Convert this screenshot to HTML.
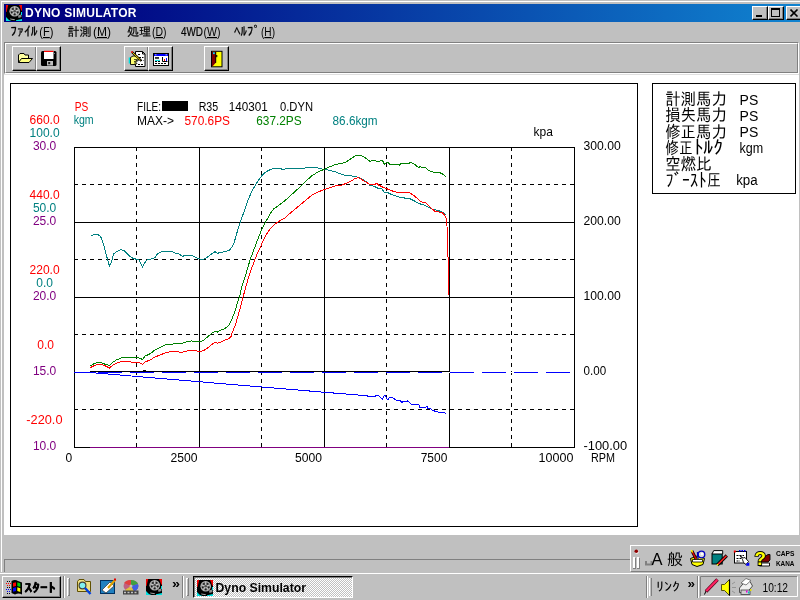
<!DOCTYPE html><html lang="ja"><head><meta charset="utf-8"><title>DYNO SIMULATOR</title><style>
*{margin:0;padding:0;box-sizing:border-box}
html,body{width:800px;height:600px;overflow:hidden;background:#c0c0c0}
body{position:relative;font-family:"Liberation Sans","IPAGothic","Noto Sans CJK JP",sans-serif;font-size:12px;color:#000}
.abs{position:absolute}
#title{left:4px;top:4px;width:800px;height:18px;background:linear-gradient(90deg,#000080 0%,#000080 8%,#1084d0 100%)}
#title .t{left:21px;top:2px;color:#fff;font-weight:bold;font-size:12px;line-height:14px;white-space:nowrap;letter-spacing:0.25px;will-change:transform}
.cb{top:2px;width:16px;height:14px;background:#c0c0c0;border:1px solid;border-color:#fff #000 #000 #fff;box-shadow:inset -1px -1px 0 #808080}
.menu span{position:absolute;top:24px;font-size:12px;line-height:14px;white-space:nowrap}
.tb{width:25px;height:25px;top:46px;background:#c0c0c0;border:1px solid;border-color:#fff #000 #000 #fff;box-shadow:inset -1px -1px 0 #808080}
svg{will-change:transform}
svg text{font-family:"Liberation Sans","IPAGothic","Noto Sans CJK JP",sans-serif}
</style></head><body>
<div class="abs" style="left:0;top:0;width:800px;height:1px;background:#c0c0c0"></div>
<div class="abs" style="left:1px;top:1px;width:799px;height:1px;background:#fff"></div>
<div class="abs" style="left:1px;top:1px;width:1px;height:571px;background:#fff"></div>
<div id="title" class="abs">
<svg class="abs" style="left:2px;top:1px" width="16" height="16" viewBox="0 0 16 16"><rect width="16" height="16" fill="#000"/><path d="M0 0H2.200L0.600 7H0Z" fill="#f00000"/><path d="M13 0H16V6L15 5L14 2Z" fill="#f00000"/><path d="M0 12L3 15L5.500 16H0Z" fill="#00e0e0"/><path d="M10 15.200L16 14V16H10Z" fill="#00e0e0"/><path d="M15 7H16V10.500L15 10Z" fill="#00e0e0"/><path d="M4 13.500L9 14.200L8.500 15.200L4.500 14.600Z" fill="#a0a0a0"/><path d="M12 10.500L15 9.500L15.500 12L12.500 13Z" fill="#909090"/><circle cx="8.700" cy="6.300" r="5.300" fill="#b4b4b4"/><circle cx="8.700" cy="6.300" r="4.200" fill="#787878"/><g stroke="#c8c8c8" stroke-width="1.100"><path d="M8.700 6.300V2M8.700 6.300L12.700 5M8.700 6.300L11.200 9.800M8.700 6.300L6.200 9.800M8.700 6.300L4.700 5"/></g><g fill="#202020"><circle cx="6.900" cy="3.900" r="0.900"/><circle cx="10.500" cy="3.900" r="0.900"/><circle cx="11.700" cy="7.300" r="0.900"/><circle cx="8.700" cy="9.400" r="0.900"/><circle cx="5.700" cy="7.300" r="0.900"/></g><circle cx="8.700" cy="6.300" r="1.300" fill="#505050"/></svg>
<div class="abs t">DYNO SIMULATOR</div>
<div class="abs cb" style="left:748px"><div class="abs" style="left:3px;top:8px;width:6px;height:2px;background:#000"></div></div>
<div class="abs cb" style="left:764px"><div class="abs" style="left:2px;top:1px;width:9px;height:9px;border:1px solid #000;border-top-width:2px"></div></div>
<div class="abs cb" style="left:782px"><svg class="abs" style="left:3px;top:2px" width="9" height="8" viewBox="0 0 9 8"><path d="M0.5 0.5 L7.5 7.5 M7.5 0.5 L0.5 7.5" stroke="#000" stroke-width="1.6" fill="none"/></svg></div>
</div>
<svg class="abs" style="left:0;top:22px" width="800" height="20" viewBox="0 22 800 20">
<text x="10.2" y="36" font-size="13.5" textLength="27.5" lengthAdjust="spacingAndGlyphs" stroke="#000" stroke-width="0.2">ﾌｧｲﾙ</text>
<text x="39.3" y="36" font-size="12" textLength="14.2" lengthAdjust="spacingAndGlyphs">(<tspan text-decoration="underline">F</tspan>)</text>
<text x="67.5" y="36" font-size="12" textLength="24" lengthAdjust="spacingAndGlyphs" stroke="#000" stroke-width="0.2">計測</text>
<text x="93" y="36" font-size="12" textLength="18" lengthAdjust="spacingAndGlyphs">(<tspan text-decoration="underline">M</tspan>)</text>
<text x="127" y="36" font-size="12" textLength="24" lengthAdjust="spacingAndGlyphs" stroke="#000" stroke-width="0.2">処理</text>
<text x="152" y="36" font-size="12" textLength="14.5" lengthAdjust="spacingAndGlyphs">(<tspan text-decoration="underline">D</tspan>)</text>
<text x="181" y="36" font-size="12" textLength="22" lengthAdjust="spacingAndGlyphs" stroke="#000" stroke-width="0.2">4WD</text>
<text x="203.5" y="36" font-size="12" textLength="17" lengthAdjust="spacingAndGlyphs">(<tspan text-decoration="underline">W</tspan>)</text>
<text x="234" y="36" font-size="13.5" textLength="26" lengthAdjust="spacingAndGlyphs" stroke="#000" stroke-width="0.2">ﾍﾙﾌﾟ</text>
<text x="261" y="36" font-size="12" textLength="14" lengthAdjust="spacingAndGlyphs">(<tspan text-decoration="underline">H</tspan>)</text>
</svg>
<div class="abs" style="left:4px;top:42px;width:795px;height:32px;border:1px solid;border-color:#808080 #fff #fff #808080"></div>
<div class="abs" style="left:5px;top:43px;width:793px;height:30px;border:1px solid;border-color:#fff #808080 #808080 #fff"></div>
<div class="abs tb" style="left:12px"><svg class="abs" style="left:-1px;top:-1px" width="24" height="24" viewBox="0 0 24 24"><path d="M6.5 16.5V9L8 7.500H12L13 9H16.500V12.500" fill="#ffffa0" stroke="#000"/><path d="M9.500 12.500H20.500L17 16.500H6.500Z" fill="#ffff80" stroke="#000"/></svg></div>
<div class="abs tb" style="left:36px"><svg class="abs" style="left:-1px;top:-1px" width="24" height="24" viewBox="0 0 24 24"><rect x="5" y="5" width="15.5" height="15" rx="1.5" fill="#000"/><rect x="8" y="5" width="9.5" height="8" fill="#fff"/><rect x="8" y="4.8" width="9.5" height="1.2" fill="#ff0000"/><rect x="11" y="15" width="6" height="4.5" fill="#c0c0c0"/><rect x="12.2" y="16" width="2" height="2.2" fill="#202020"/><rect x="18" y="7" width="1" height="1" fill="#808080"/></svg></div>
<div class="abs tb" style="left:124px"><svg class="abs" style="left:-1px;top:-1px" width="24" height="24" viewBox="0 0 24 24"><path d="M11.500 5.500H18.500L21 8V20.500H11.500Z" fill="#fff" stroke="#000"/><path d="M18.500 5.500V8H21" fill="none" stroke="#000"/><g stroke="#000" stroke-dasharray="2 1"><path d="M14 8.500H17M15 11.500H19.500M16 14.500H19.500M14 18.500H19.500"/></g><rect x="4.700" y="11.500" width="2" height="6" fill="#00e0e0"/><path d="M6.500 11.500L9 10H12L15 12.500V14L12 14.500L13 15.500L12 16.500L13 17.500L11 18.500H6.500Z" fill="#ffff70" stroke="#000" stroke-width="0.900"/><path d="M10 13.500H13.500M10 15.500H12.500M10 17H12" stroke="#000" stroke-width="0.700"/><path d="M8 6L17.500 15" stroke="#000" stroke-width="2.300"/><path d="M8.300 6.300L16.400 14" stroke="#ffe000" stroke-width="1"/><rect x="7.200" y="5.200" width="1.600" height="1.600" fill="#ff0000"/></svg></div>
<div class="abs tb" style="left:148px"><svg class="abs" style="left:-1px;top:-1px" width="24" height="24" viewBox="0 0 24 24"><rect x="5.5" y="7.5" width="15" height="12" fill="#fff" stroke="#000"/><rect x="6" y="8" width="14" height="2" fill="#0000ff"/><rect x="7" y="8.3" width="1.5" height="1" fill="#c0c0c0"/><rect x="17.5" y="8.3" width="1.5" height="1" fill="#c0c0c0"/><rect x="7" y="11.2" width="4" height="1.5" fill="#000"/><rect x="7" y="13.9" width="5" height="1" fill="#00e0e0"/><path d="M7 15.5H12M7 17.5H19" stroke="#000" stroke-dasharray="2 1"/><path d="M14.5 11V15.5H19.5" fill="none" stroke="#000"/><rect x="16" y="13" width="1" height="2" fill="#ff0000"/><rect x="18" y="12" width="1" height="3" fill="#0000ff"/></svg></div>
<div class="abs tb" style="left:204px"><svg class="abs" style="left:-1px;top:-1px" width="24" height="24" viewBox="0 0 24 24"><rect x="7.5" y="5.3" width="10.5" height="15.5" fill="#ffff00" stroke="#000"/><path d="M8 5.8H12V16.5L8.6 20.3H8Z" fill="#800000"/><rect x="11.3" y="5.8" width="0.9" height="11" fill="#000"/><rect x="9" y="6.3" width="1.8" height="1.8" fill="#00e0ff"/><rect x="12" y="9.8" width="1.2" height="1.2" fill="#ffff00" stroke="#000" stroke-width="0.3"/></svg></div>
<div class="abs" style="left:4px;top:74px;width:795px;height:1px;background:#dfdfdf"></div>
<div class="abs" style="left:4px;top:75px;width:795px;height:460px;background:#fff"></div>
<div class="abs" style="left:10px;top:83px;width:628px;height:444px;border:1px solid #000;background:#fff"></div>
<div class="abs" style="left:652px;top:83px;width:144px;height:111px;border:1px solid #000;background:#fff"></div>
<svg class="abs" style="left:0;top:0" width="800" height="600" viewBox="0 0 800 600" shape-rendering="crispEdges">
<line x1="74.5" y1="147" x2="74.5" y2="448" stroke="#000"/>
<line x1="136.5" y1="147" x2="136.5" y2="448" stroke="#000" stroke-dasharray="4 4"/>
<line x1="199.5" y1="147" x2="199.5" y2="448" stroke="#000"/>
<line x1="261.5" y1="147" x2="261.5" y2="448" stroke="#000" stroke-dasharray="4 4"/>
<line x1="324.5" y1="147" x2="324.5" y2="448" stroke="#000"/>
<line x1="386.5" y1="147" x2="386.5" y2="448" stroke="#000" stroke-dasharray="4 4"/>
<line x1="449.5" y1="147" x2="449.5" y2="448" stroke="#000"/>
<line x1="511.5" y1="147" x2="511.5" y2="448" stroke="#000" stroke-dasharray="4 4"/>
<line x1="574.5" y1="147" x2="574.5" y2="448" stroke="#000"/>
<line x1="74" y1="147.5" x2="575" y2="147.5" stroke="#000"/>
<line x1="74" y1="184.5" x2="575" y2="184.5" stroke="#000" stroke-dasharray="4 4"/>
<line x1="74" y1="222.5" x2="575" y2="222.5" stroke="#000"/>
<line x1="74" y1="259.5" x2="575" y2="259.5" stroke="#000" stroke-dasharray="4 4"/>
<line x1="74" y1="297.5" x2="575" y2="297.5" stroke="#000"/>
<line x1="74" y1="334.5" x2="575" y2="334.5" stroke="#000" stroke-dasharray="4 4"/>
<line x1="74" y1="372.5" x2="575" y2="372.5" stroke="#000"/>
<line x1="74" y1="409.5" x2="575" y2="409.5" stroke="#000" stroke-dasharray="4 4"/>
<line x1="74" y1="447.5" x2="575" y2="447.5" stroke="#000"/>
<g fill="none" stroke-width="1" shape-rendering="crispEdges">
<line x1="90" y1="447.5" x2="449" y2="447.5" stroke="#800080"/>
<rect x="75" y="372" width="499" height="1" fill="#fff" stroke="none"/>
<path d="M74 372.5H90M98 372.5H122M130 372.5H154M162 372.5H186M194 372.5H218M226 372.5H250M258 372.5H282M290 372.5H314M322 372.5H346M354 372.5H378M386 372.5H410M418 372.5H442M450 372.5H474M482 372.5H506M514 372.5H538M546 372.5H570" stroke="#0000ff"/>
<path d="M90 371.5H449M143 370.5H146" stroke="#000"/>
<polyline points="90.0,372.5 270.0,387.7 325.0,392.3 360.0,395.2 366.9,395.2 367.5,396.5 375.0,396.5 375.6,395.2 378.0,395.2 380.0,396.9 382.5,399.4 384.4,395.6 385.0,395.2 386.9,398.8 388.0,399.4 389.4,397.5 393.0,398.0 396.2,400.2 400.0,400.6 401.9,402.5 403.8,401.2 405.6,402.0 407.5,401.0 409.4,402.2 411.2,404.4 413.8,404.0 416.2,405.0 418.8,404.8 419.8,407.2 425.6,407.2 426.9,406.2 428.0,408.5 430.6,408.5 431.9,410.0 433.8,410.6 435.0,411.5 438.0,411.9 440.0,412.5 444.4,412.8 446.0,413.8" stroke="#0000ff"/>
<polyline points="90.5,236.2 93.8,234.5 97.5,234.5 100.5,236.2 103.8,245.0 107.0,257.5 109.5,266.2 111.2,262.5 113.8,253.8 117.5,251.2 121.2,249.5 125.0,251.2 128.8,255.5 132.5,258.0 136.2,259.2 138.8,260.0 142.5,266.8 145.0,262.5 147.5,259.5 151.2,259.0 155.0,257.5 157.5,253.8 161.2,252.0 166.2,251.2 171.2,251.2 175.0,253.0 178.8,253.8 182.5,256.2 186.2,255.5 190.0,255.0 193.8,256.2 197.5,258.2 201.2,259.5 205.0,258.8 208.8,256.2 212.5,253.2 215.0,251.8 217.5,253.2 221.2,252.5 225.0,251.6 229.0,250.6 232.0,247.0 234.0,243.0 236.0,236.0 238.0,229.0 240.0,223.0 242.0,217.0 244.0,212.0 248.0,200.0 252.0,191.0 256.0,184.0 260.0,178.0 264.0,173.4 268.0,170.6 272.0,169.0 275.0,168.4 280.0,168.6 283.0,169.4 288.0,168.6 296.0,168.4 304.0,168.2 310.0,167.4 316.0,167.6 322.0,169.0 328.0,170.0 334.0,171.4 340.0,173.6 345.0,175.4 350.0,175.6 356.0,176.6 360.0,178.0 364.0,180.0 368.0,183.0 370.0,185.6 373.8,186.2 377.5,188.0 382.0,189.0 384.4,192.2 387.0,192.2 390.0,193.8 395.0,195.6 399.4,197.2 402.5,197.5 407.5,198.8 410.6,199.0 413.8,200.6 418.8,203.5 423.8,205.0 428.0,207.0 432.5,209.4 437.5,210.2 442.0,212.0 445.6,214.4" stroke="#008080"/>
<polyline points="90.5,365.8 93.8,363.8 97.5,362.5 101.2,362.5 105.0,364.2 109.5,365.5 112.5,362.5 116.2,360.0 121.2,358.0 126.2,357.5 131.2,358.0 136.2,357.5 140.0,358.2 142.5,359.5 145.0,356.2 150.0,353.8 155.0,350.0 160.0,347.5 165.0,345.0 170.0,344.2 176.2,343.8 181.2,343.8 186.2,341.8 191.2,341.0 196.2,341.2 200.0,341.8 203.8,340.0 207.5,337.0 211.2,333.8 215.0,331.2 217.5,332.0 221.2,330.0 225.0,328.6 229.0,325.0 232.0,319.0 235.0,311.0 238.0,301.0 240.0,295.0 242.0,286.0 245.0,277.0 248.0,267.0 250.0,260.0 253.0,252.0 256.0,244.0 259.0,236.0 262.0,229.0 265.0,223.0 268.0,218.0 270.0,214.0 274.0,208.6 278.0,206.0 282.0,203.0 288.0,198.0 294.0,192.4 300.0,187.0 306.0,181.0 312.0,175.6 318.0,172.0 324.0,169.4 330.0,166.6 336.0,164.4 342.0,163.4 346.0,162.0 351.0,158.6 355.0,156.0 358.0,155.0 361.0,155.4 364.0,157.0 367.0,159.0 370.0,161.5 372.5,160.6 375.6,160.6 378.0,162.0 380.0,161.0 382.5,160.6 384.4,164.4 386.2,163.0 388.0,162.5 390.0,164.4 396.2,164.0 399.4,165.0 400.6,163.8 408.8,163.8 410.6,162.2 413.0,163.5 415.6,165.0 418.0,167.2 418.8,168.0 420.0,166.2 422.0,167.5 425.6,167.5 428.0,170.0 430.6,171.5 433.8,172.2 439.4,172.5 442.5,174.0 445.6,176.5" stroke="#008000"/>
<polyline points="90.5,367.5 93.8,365.8 97.5,364.2 101.2,364.2 105.0,365.8 109.5,368.0 112.5,365.5 116.2,363.2 121.2,361.5 126.2,361.2 131.2,362.0 136.2,362.0 140.0,363.0 142.5,364.5 145.0,362.0 150.0,360.0 155.0,357.0 160.0,355.0 165.0,353.0 170.0,351.8 176.2,351.2 181.2,352.5 186.2,351.2 191.2,350.0 196.2,350.8 200.0,351.8 203.8,350.5 207.5,348.0 211.2,345.0 215.0,342.0 217.5,343.2 221.2,341.8 225.0,340.0 228.8,338.8 231.2,336.2 232.0,333.0 235.0,326.0 238.0,316.0 241.0,305.0 243.0,297.0 245.0,290.0 248.0,279.0 251.0,270.0 254.0,262.0 257.0,254.0 260.0,248.0 263.0,241.0 266.0,235.0 270.0,229.0 274.0,225.0 278.0,222.0 282.0,219.4 285.0,218.0 288.0,215.0 294.0,210.0 300.0,205.0 306.0,200.0 312.0,195.0 318.0,192.0 324.0,189.6 330.0,187.6 336.0,185.6 342.0,185.0 346.0,183.4 351.0,181.0 355.0,178.6 358.0,177.6 361.0,179.0 364.0,181.0 367.0,182.6 370.0,185.0 375.0,184.4 376.2,183.0 378.8,185.2 382.5,187.0 386.2,188.5 390.0,190.0 393.8,191.5 399.4,193.0 403.0,192.2 406.2,192.8 410.0,193.0 413.0,195.0 417.0,198.0 420.0,201.0 422.5,202.5 425.6,202.5 428.0,205.0 431.2,208.0 434.4,211.0 438.8,212.0 442.5,213.0 445.0,215.6 446.5,218.8 447.0,226.0 447.5,256.0 448.3,257.8 448.5,295.4" stroke="#ff0000"/>
</g>
<text x="44.6" y="123.5" fill="#ff0000" font-size="12" text-anchor="middle" shape-rendering="auto">660.0</text>
<text x="44.6" y="136.5" fill="#008080" font-size="12" text-anchor="middle" shape-rendering="auto">100.0</text>
<text x="44.6" y="149.5" fill="#800080" font-size="12" text-anchor="middle" shape-rendering="auto">30.0</text>
<text x="44.6" y="198.5" fill="#ff0000" font-size="12" text-anchor="middle" shape-rendering="auto">440.0</text>
<text x="44.6" y="211.5" fill="#008080" font-size="12" text-anchor="middle" shape-rendering="auto">50.0</text>
<text x="44.6" y="224.5" fill="#800080" font-size="12" text-anchor="middle" shape-rendering="auto">25.0</text>
<text x="44.6" y="273.5" fill="#ff0000" font-size="12" text-anchor="middle" shape-rendering="auto">220.0</text>
<text x="44.6" y="286.5" fill="#008080" font-size="12" text-anchor="middle" shape-rendering="auto">0.0</text>
<text x="44.6" y="299.5" fill="#800080" font-size="12" text-anchor="middle" shape-rendering="auto">20.0</text>
<text x="45.6" y="348.5" fill="#ff0000" font-size="12" text-anchor="middle" shape-rendering="auto">0.0</text>
<text x="44.6" y="374.5" fill="#800080" font-size="12" text-anchor="middle" shape-rendering="auto">15.0</text>
<text x="44.4" y="423.5" fill="#ff0000" font-size="12" text-anchor="middle" textLength="36.2" lengthAdjust="spacingAndGlyphs" shape-rendering="auto">-220.0</text>
<text x="44.6" y="449.5" fill="#800080" font-size="12" text-anchor="middle" shape-rendering="auto">10.0</text>
<text x="583.5" y="150" fill="#000" font-size="12" text-anchor="start" textLength="37.2" lengthAdjust="spacingAndGlyphs" shape-rendering="auto">300.00</text>
<text x="583.5" y="225" fill="#000" font-size="12" text-anchor="start" textLength="37.2" lengthAdjust="spacingAndGlyphs" shape-rendering="auto">200.00</text>
<text x="583.5" y="300" fill="#000" font-size="12" text-anchor="start" textLength="37.2" lengthAdjust="spacingAndGlyphs" shape-rendering="auto">100.00</text>
<text x="583.5" y="375" fill="#000" font-size="12" text-anchor="start" textLength="22.6" lengthAdjust="spacingAndGlyphs" shape-rendering="auto">0.00</text>
<text x="583.5" y="450" fill="#000" font-size="12" text-anchor="start" textLength="43.6" lengthAdjust="spacingAndGlyphs" shape-rendering="auto">-100.00</text>
<text x="591" y="461.5" fill="#000" font-size="12" text-anchor="start" textLength="24" lengthAdjust="spacingAndGlyphs" shape-rendering="auto">RPM</text>
<text x="72.3" y="461.5" fill="#000" font-size="12" text-anchor="end" shape-rendering="auto">0</text>
<text x="197.5" y="461.5" fill="#000" font-size="12" text-anchor="end" textLength="27" lengthAdjust="spacingAndGlyphs" shape-rendering="auto">2500</text>
<text x="322" y="461.5" fill="#000" font-size="12" text-anchor="end" textLength="27" lengthAdjust="spacingAndGlyphs" shape-rendering="auto">5000</text>
<text x="447.3" y="461.5" fill="#000" font-size="12" text-anchor="end" textLength="26.6" lengthAdjust="spacingAndGlyphs" shape-rendering="auto">7500</text>
<text x="573.4" y="461.5" fill="#000" font-size="12" text-anchor="end" textLength="34.8" lengthAdjust="spacingAndGlyphs" shape-rendering="auto">10000</text>
<text x="533.6" y="135.8" fill="#000" font-size="12" text-anchor="start" shape-rendering="auto">kpa</text>
<text x="74.7" y="110.6" fill="#ff0000" font-size="12" text-anchor="start" textLength="13.5" lengthAdjust="spacingAndGlyphs" shape-rendering="auto">PS</text>
<text x="73.7" y="123.6" fill="#008080" font-size="12" text-anchor="start" textLength="20" lengthAdjust="spacingAndGlyphs" shape-rendering="auto">kgm</text>
<text x="137" y="110.6" fill="#000" font-size="12" text-anchor="start" textLength="24" lengthAdjust="spacingAndGlyphs" shape-rendering="auto">FILE:</text>
<rect x="162" y="101" width="26" height="10" fill="#000"/>
<text x="198.7" y="110.6" fill="#000" font-size="12" text-anchor="start" textLength="19.5" lengthAdjust="spacingAndGlyphs" shape-rendering="auto">R35</text>
<text x="228.7" y="110.6" fill="#000" font-size="12" text-anchor="start" textLength="39" lengthAdjust="spacingAndGlyphs" shape-rendering="auto">140301</text>
<text x="280" y="110.6" fill="#000" font-size="12" text-anchor="start" textLength="33" lengthAdjust="spacingAndGlyphs" shape-rendering="auto">0.DYN</text>
<text x="137" y="125" fill="#000" font-size="12" text-anchor="start" textLength="37" lengthAdjust="spacingAndGlyphs" shape-rendering="auto">MAX-&gt;</text>
<text x="184.5" y="125" fill="#ff0000" font-size="12" text-anchor="start" textLength="45.5" lengthAdjust="spacingAndGlyphs" shape-rendering="auto">570.6PS</text>
<text x="256.2" y="125" fill="#008000" font-size="12" text-anchor="start" textLength="45.5" lengthAdjust="spacingAndGlyphs" shape-rendering="auto">637.2PS</text>
<text x="332.6" y="125" fill="#008080" font-size="12" text-anchor="start" textLength="45" lengthAdjust="spacingAndGlyphs" shape-rendering="auto">86.6kgm</text>
<text x="665.2" y="105.3" fill="#000" font-size="17" text-anchor="start" textLength="61.6" lengthAdjust="spacingAndGlyphs" shape-rendering="auto">計測馬力</text>
<text x="739.6" y="104.5" fill="#000" font-size="14" text-anchor="start" textLength="18.7" lengthAdjust="spacingAndGlyphs" shape-rendering="auto">PS</text>
<text x="665.2" y="121.44999999999999" fill="#000" font-size="17" text-anchor="start" textLength="61.6" lengthAdjust="spacingAndGlyphs" shape-rendering="auto">損失馬力</text>
<text x="739.6" y="120.64999999999999" fill="#000" font-size="14" text-anchor="start" textLength="18.7" lengthAdjust="spacingAndGlyphs" shape-rendering="auto">PS</text>
<text x="665.2" y="137.6" fill="#000" font-size="17" text-anchor="start" textLength="61.6" lengthAdjust="spacingAndGlyphs" shape-rendering="auto">修正馬力</text>
<text x="739.6" y="136.79999999999998" fill="#000" font-size="14" text-anchor="start" textLength="18.7" lengthAdjust="spacingAndGlyphs" shape-rendering="auto">PS</text>
<text x="665.2" y="153.75" fill="#000" font-size="17" text-anchor="start" textLength="27.5" lengthAdjust="spacingAndGlyphs" shape-rendering="auto">修正</text>
<text x="693.5" y="154.35" fill="#000" font-size="19" text-anchor="start" textLength="29.5" lengthAdjust="spacingAndGlyphs" shape-rendering="auto">ﾄﾙｸ</text>
<text x="739.6" y="152.95" fill="#000" font-size="14" text-anchor="start" textLength="23.7" lengthAdjust="spacingAndGlyphs" shape-rendering="auto">kgm</text>
<text x="665.2" y="169.89999999999998" fill="#000" font-size="17" text-anchor="start" textLength="46.5" lengthAdjust="spacingAndGlyphs" shape-rendering="auto">空燃比</text>
<text x="665.5" y="186.65" fill="#000" font-size="19" text-anchor="start" textLength="41" lengthAdjust="spacingAndGlyphs" shape-rendering="auto">ﾌﾞｰｽﾄ</text>
<text x="707.3" y="186.05" fill="#000" font-size="17" text-anchor="start" textLength="13.5" lengthAdjust="spacingAndGlyphs" shape-rendering="auto">圧</text>
<text x="736.2" y="185.25" fill="#000" font-size="14" text-anchor="start" textLength="21.5" lengthAdjust="spacingAndGlyphs" shape-rendering="auto">kpa</text>
</svg>
<div class="abs" style="left:4px;top:559px;width:796px;height:14px;border:1px solid;border-color:#808080 #fff #fff #808080"></div>
<div class="abs" style="left:630px;top:545px;width:172px;height:27px;background:#c0c0c0;border:1px solid;border-color:#fff #808080 #808080 #fff"></div>
<svg class="abs" style="left:630px;top:545px" width="170" height="27" viewBox="630 545 170 27">
<rect x="633" y="557" width="2" height="12" fill="#fff"/><rect x="635" y="558" width="1" height="11" fill="#808080"/><rect x="637" y="557" width="2" height="12" fill="#fff"/><rect x="639" y="558" width="1" height="11" fill="#808080"/><rect x="633" y="568" width="3" height="1" fill="#808080"/><rect x="637" y="568" width="3" height="1" fill="#808080"/>
<circle cx="636.8" cy="551.8" r="1.9" fill="#fff"/><circle cx="636.3" cy="551.2" r="1.8" fill="#900000"/>
<path d="M646 561V564.500H651.500V561" stroke="#808080" stroke-width="2" fill="none"/>
<text x="651.5" y="565" font-size="17" textLength="11" lengthAdjust="spacingAndGlyphs">A</text>
<text x="667" y="565" font-size="16">般</text>
<g><path d="M690.5 558.5L692 564.5L697 566.5L703 564.5L704.500 558.500L697 556Z" fill="#ffff00" stroke="#000"/><path d="M692.500 559.500H702.500V562H692.500Z" fill="#fff" stroke="#000" stroke-width="0.800"/><circle cx="701.500" cy="554.500" r="3.300" fill="#d8d8d8" stroke="#0000c0" stroke-width="1.300"/><circle cx="702" cy="554" r="1.300" fill="#fff"/><path d="M692 551L696 559" stroke="#000" stroke-width="2.800"/><path d="M692 551L696 559" stroke="#e00000" stroke-width="1.500"/><path d="M691.300 550L692.500 552.500" stroke="#ffff00" stroke-width="1.500"/><path d="M697.500 552L698 559" stroke="#0000c0" stroke-width="1.400"/></g>
<g><path d="M712 554L713.700 550.600H722.700V554" fill="#fff" stroke="#000"/><rect x="712" y="554" width="10.200" height="10" fill="#008080" stroke="#000"/><path d="M717.300 565L726.800 555.500" stroke="#000" stroke-width="3.200"/><path d="M718 564.300L726.500 555.800" stroke="#ff2020" stroke-width="1.600"/><rect x="716.800" y="564" width="1.500" height="1.500" fill="#ffff00"/></g>
<g><rect x="734.500" y="551.500" width="12" height="11.500" fill="#fff" stroke="#000"/><path d="M739 550.800H746" stroke="#0000ff" stroke-width="1.600" stroke-dasharray="1.500 1"/><rect x="733.800" y="550.500" width="2" height="2" fill="#ff0000"/><path d="M736.500 555.500H744M736.500 558.500H741M736.500 561H740" stroke="#000" stroke-dasharray="2 1"/><path d="M740 555.500L743 558L745 557.500L748.500 561.500L746 564.500L743.500 562.500L742.500 559.500Z" fill="#fff" stroke="#000" stroke-width="0.900"/><path d="M746 565.800L749.300 565.800L749.300 562.500L746.500 563.500Z" fill="#0000ff"/></g>
<g><path d="M759.500 563H769.500V566H759.500Z" fill="#fff" stroke="#000" stroke-width="0.900"/><path d="M760 559.500L768 554.500H770V560L768 562H760Z" fill="#800000" stroke="#000" stroke-width="0.900"/><text x="754.500" y="565.300" font-size="19" font-weight="bold" fill="#ffff00" stroke="#000" stroke-width="1.800" paint-order="stroke" textLength="11.500" lengthAdjust="spacingAndGlyphs">?</text></g>
<text x="776" y="555.6" font-size="7" font-weight="bold" textLength="18.5" lengthAdjust="spacingAndGlyphs">CAPS</text>
<text x="776" y="566.3" font-size="7" font-weight="bold" textLength="18.5" lengthAdjust="spacingAndGlyphs">KANA</text>
</svg>
<div class="abs" style="left:0;top:572px;width:800px;height:28px;background:#c0c0c0"></div>
<div class="abs" style="left:0;top:573px;width:800px;height:1px;background:#fff"></div>
<div class="abs" style="left:2px;top:576px;width:59px;height:22px;background:#c0c0c0;border:1px solid;border-color:#fff #000 #000 #fff;box-shadow:inset -1px -1px 0 #808080"></div>
<svg class="abs" style="left:0;top:572px" width="800" height="28" viewBox="0 572 800 28">
<g><path d="M11.500 581C14 579.500 16 579.500 18 581L22 582.500V594.500C19.500 593 17.500 593 15 594.500L11.500 593Z" fill="#000"/><path d="M13 583L16 582.300V586L13 586.700Z" fill="#ff0000"/><path d="M17.300 582.300L20.300 583.300V587L17.300 586Z" fill="#00d000"/><path d="M13 588L16 587.300V591L13 591.700Z" fill="#0000ff"/><path d="M17.300 587.300L20.300 588.300V592L17.300 591Z" fill="#ffff00"/><g stroke-dasharray="1 1"><path d="M6 583.500H11M7 585.500H11" stroke="#ff0000"/><path d="M6 589.500H11M7 591.500H11" stroke="#0000ff"/><path d="M7 581.500H11M7 587.500H11M7 593.500H11" stroke="#000"/></g></g>
<text x="24.5" y="592" font-size="12.5" font-weight="bold" textLength="31" lengthAdjust="spacingAndGlyphs" stroke="#000" stroke-width="0.25">ｽﾀｰﾄ</text>
<rect x="63" y="576" width="1" height="22" fill="#808080"/><rect x="64" y="576" width="1" height="22" fill="#fff"/>
<rect x="67" y="578" width="1" height="18" fill="#fff"/><rect x="68" y="578" width="1" height="18" fill="#c0c0c0"/><rect x="69" y="578" width="1" height="18" fill="#808080"/><rect x="67" y="578" width="2" height="1" fill="#fff"/><rect x="68" y="595" width="2" height="1" fill="#808080"/>
<g><path d="M77.5 581.5L79 579.5H84L85.5 581.5H90.5V591.5H77.5Z" fill="#f0e080" stroke="#605000"/><circle cx="82.5" cy="585.5" r="3.4" fill="#80f0f0" stroke="#404040" stroke-width="1.2"/><path d="M85 588L90.5 594" stroke="#0040e0" stroke-width="2.4"/></g>
<g><rect x="100.500" y="580.5" width="14" height="13" fill="#2080c0" stroke="#003060"/><path d="M102 590L110 582L114 586L106 593Z" fill="#fff" stroke="#404040" stroke-width="0.8"/><path d="M108 588L115.500 579.500" stroke="#e0a000" stroke-width="2.2"/><rect x="114" y="578.5" width="2" height="2" fill="#e00000"/></g>
<g><ellipse cx="131" cy="586" rx="7.5" ry="6" fill="#c06080"/><path d="M131 586L124 583A7.500 6 0 0 1 131 580Z" fill="#e04040"/><path d="M131 586V580A7.500 6 0 0 1 138 584Z" fill="#40a040"/><path d="M131 586L138 584A7.500 6 0 0 1 134 591.500Z" fill="#4060e0"/><path d="M131 586L134 591.500A7.500 6 0 0 1 125 590Z" fill="#e0c040"/><circle cx="131" cy="586" r="1.500" fill="#c0c0c0"/><rect x="123" y="590.500" width="15.500" height="4" fill="#404040"/><path d="M124 592.500H138" stroke="#c0c0c0" stroke-width="1.500" stroke-dasharray="2 1.500"/></g>
<svg x="146" y="579" width="16" height="16" viewBox="0 0 16 16"><rect width="16" height="16" fill="#000"/><path d="M0 0H2.200L0.600 7H0Z" fill="#f00000"/><path d="M13 0H16V6L15 5L14 2Z" fill="#f00000"/><path d="M0 12L3 15L5.500 16H0Z" fill="#00e0e0"/><path d="M10 15.200L16 14V16H10Z" fill="#00e0e0"/><path d="M15 7H16V10.500L15 10Z" fill="#00e0e0"/><path d="M4 13.500L9 14.200L8.500 15.200L4.500 14.600Z" fill="#a0a0a0"/><path d="M12 10.500L15 9.500L15.500 12L12.500 13Z" fill="#909090"/><circle cx="8.700" cy="6.300" r="5.300" fill="#b4b4b4"/><circle cx="8.700" cy="6.300" r="4.200" fill="#787878"/><g stroke="#c8c8c8" stroke-width="1.100"><path d="M8.700 6.300V2M8.700 6.300L12.700 5M8.700 6.300L11.200 9.800M8.700 6.300L6.200 9.800M8.700 6.300L4.700 5"/></g><g fill="#202020"><circle cx="6.900" cy="3.900" r="0.900"/><circle cx="10.500" cy="3.900" r="0.900"/><circle cx="11.700" cy="7.300" r="0.900"/><circle cx="8.700" cy="9.400" r="0.900"/><circle cx="5.700" cy="7.300" r="0.900"/></g><circle cx="8.700" cy="6.300" r="1.300" fill="#505050"/></svg>
<text x="172" y="587.5" font-size="13" font-weight="bold" textLength="8" lengthAdjust="spacingAndGlyphs">»</text>
<rect x="182" y="576" width="1" height="22" fill="#808080"/><rect x="183" y="576" width="1" height="22" fill="#fff"/>
<rect x="186" y="578" width="1" height="18" fill="#fff"/><rect x="187" y="578" width="1" height="18" fill="#c0c0c0"/><rect x="188" y="578" width="1" height="18" fill="#808080"/><rect x="186" y="578" width="2" height="1" fill="#fff"/><rect x="187" y="595" width="2" height="1" fill="#808080"/>
</svg>
<div class="abs" style="left:193px;top:576px;width:160px;height:22px;border:1px solid;border-color:#000 #fff #fff #000;box-shadow:inset 1px 1px 0 #808080;background:repeating-conic-gradient(#fff 0% 25%,#c0c0c0 0% 50%) 0 0/2px 2px"></div>
<svg class="abs" style="left:197px;top:580px" width="16" height="16" viewBox="0 0 16 16"><rect width="16" height="16" fill="#000"/><path d="M0 0H2.200L0.600 7H0Z" fill="#f00000"/><path d="M13 0H16V6L15 5L14 2Z" fill="#f00000"/><path d="M0 12L3 15L5.500 16H0Z" fill="#00e0e0"/><path d="M10 15.200L16 14V16H10Z" fill="#00e0e0"/><path d="M15 7H16V10.500L15 10Z" fill="#00e0e0"/><path d="M4 13.500L9 14.200L8.500 15.200L4.500 14.600Z" fill="#a0a0a0"/><path d="M12 10.500L15 9.500L15.500 12L12.500 13Z" fill="#909090"/><circle cx="8.700" cy="6.300" r="5.300" fill="#b4b4b4"/><circle cx="8.700" cy="6.300" r="4.200" fill="#787878"/><g stroke="#c8c8c8" stroke-width="1.100"><path d="M8.700 6.300V2M8.700 6.300L12.700 5M8.700 6.300L11.200 9.800M8.700 6.300L6.200 9.800M8.700 6.300L4.700 5"/></g><g fill="#202020"><circle cx="6.900" cy="3.900" r="0.900"/><circle cx="10.500" cy="3.900" r="0.900"/><circle cx="11.700" cy="7.300" r="0.900"/><circle cx="8.700" cy="9.400" r="0.900"/><circle cx="5.700" cy="7.300" r="0.900"/></g><circle cx="8.700" cy="6.300" r="1.300" fill="#505050"/></svg>
<svg class="abs" style="left:0;top:572px" width="800" height="28" viewBox="0 572 800 28">
<text x="215.5" y="592" font-size="12.5" font-weight="bold" textLength="90.5" lengthAdjust="spacingAndGlyphs">Dyno Simulator</text>
<rect x="646" y="576" width="1" height="22" fill="#808080"/><rect x="647" y="576" width="1" height="22" fill="#fff"/>
<rect x="649" y="578" width="1" height="18" fill="#fff"/><rect x="650" y="578" width="1" height="18" fill="#c0c0c0"/><rect x="651" y="578" width="1" height="18" fill="#808080"/>
<text x="656" y="591" font-size="12.5" textLength="24" lengthAdjust="spacingAndGlyphs">ﾘﾝｸ</text>
<text x="687.5" y="587.5" font-size="13" font-weight="bold" textLength="7.5" lengthAdjust="spacingAndGlyphs">»</text>
<rect x="697" y="576" width="1" height="22" fill="#808080"/><rect x="698" y="576" width="1" height="22" fill="#fff"/>
<path d="M700.5 596.5V576.5H797" stroke="#808080" fill="none"/><path d="M700.5 596.5H797.5V576.5" stroke="#fff" fill="none"/>
<path d="M704.5 594.500L706 591" stroke="#000" stroke-width="1"/><path d="M706 591.500L717.500 579.500" stroke="#600020" stroke-width="3.400"/><path d="M706.300 591L717.300 579.700" stroke="#ff2060" stroke-width="2"/>
<path d="M721.500 584.500H724.500L729.500 579.500V595.500L724.500 590.500H721.500Z" fill="#ffff00" stroke="#404000" stroke-width="0.9"/><path d="M729.500 579.500V595.500" stroke="#000" stroke-width="1.200"/><path d="M732 584L735 582M732 587.500H736M732 591L735 593" stroke="#909090" stroke-width="0.9"/>
<g><path d="M739.500 588L745 581.500H750L752.500 586L747 592.500H739.500Z" fill="#f0f0f0" stroke="#404040" stroke-width="0.9"/><path d="M741 583L746 578.500L751 580.500L746 585Z" fill="#fff" stroke="#606060" stroke-width="0.800"/><rect x="741" y="590" width="9" height="4.500" fill="#d0d0d0" stroke="#404040" stroke-width="0.800"/><rect x="746" y="590.500" width="1.500" height="2" fill="#e000e0"/><rect x="748" y="591.500" width="1.500" height="2" fill="#00c0c0"/><rect x="750" y="589" width="1.500" height="2" fill="#e0e000"/></g>
<text x="762.500" y="591.600" font-size="12" textLength="25.500" lengthAdjust="spacingAndGlyphs">10:12</text>
</svg>
</body></html>
